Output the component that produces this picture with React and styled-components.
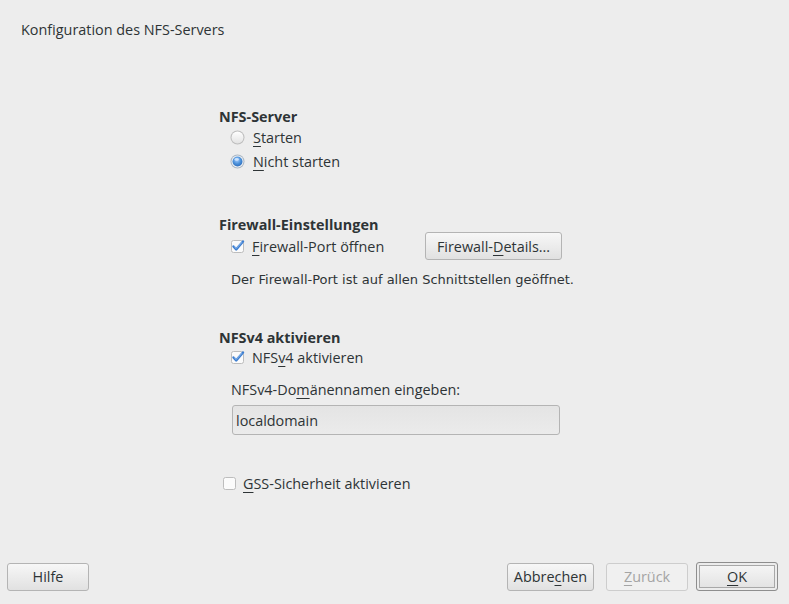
import { createGlobalStyle, styled, css } from 'styled-components';

const GlobalStyle = createGlobalStyle`
  html, body {
    margin: 0;
    padding: 0;
    background: #ededed;
  }
  body {
    font-family: "Open Sans", "Noto Sans", sans-serif;
    font-size: 14.4px;
    color: #2e3436;
  }
`;

const Window = styled.div`
  width: 789px;
  height: 604px;
  display: flex;
  flex-direction: column;
  background: #ededed;
  box-sizing: border-box;
`;

const Title = styled.div`
  padding: 20px 0 0 21px;
  line-height: 20px;
`;

const Content = styled.div`
  flex: 1;
  display: flex;
  flex-direction: column;
  padding-left: 219px;
`;

const Heading = styled.div`
  font-weight: bold;
  line-height: 16px;
  margin-top: ${(p) => p.$top}px;
`;

const Group = styled.div`
  display: flex;
  flex-direction: column;
  gap: ${(p) => p.$gap || 0}px;
  padding-left: ${(p) => (p.$indent ?? 12)}px;
  margin-top: ${(p) => p.$top || 0}px;
`;

const OptionRow = styled.label`
  display: flex;
  align-items: center;
  height: ${(p) => p.$h || 21}px;
  gap: ${(p) => p.$gap || 8}px;
`;

const Mn = styled.span`
  text-decoration: underline;
  text-underline-offset: 3px;
  text-decoration-thickness: 1px;
`;

const Note = styled.div`
  font-family: "DejaVu Sans", sans-serif;
  font-size: 13px;
  line-height: 20px;
  margin-top: ${(p) => p.$top || 0}px;
`;

const Plain = styled.div`
  line-height: 20px;
  margin-top: ${(p) => p.$top || 0}px;
`;

const buttonBase = css`
  height: 28px;
  box-sizing: border-box;
  border: 1px solid #b4b4b4;
  border-radius: 3px;
  background: linear-gradient(#f7f7f7, #e1e1e1);
  font-family: "Open Sans", "Noto Sans", sans-serif;
  font-size: 14.4px;
  color: #2e3436;
  padding: 0;
  display: inline-flex;
  align-items: center;
  justify-content: center;
`;

const Button = styled.button`
  ${buttonBase};
  width: ${(p) => p.$w}px;
  ${(p) =>
    p.$disabled &&
    css`
      background: #f0f0f0;
      border-color: #cdcdcd;
      color: #a4a4a4;
    `}
  ${(p) =>
    p.$default &&
    css`
      height: 29px;
      margin-left: -4px;
      border-color: #8e8e8e;
      box-shadow: inset 0 0 0 2px #ececec, inset 0 0 0 3px #a8a8a8;
    `}
`;

const FirewallRow = styled.div`
  display: flex;
  align-items: center;
  height: 28px;
  margin-top: -1px;
  padding-left: 12px;
`;

const CheckLabel = styled.label`
  display: flex;
  align-items: center;
  gap: 8px;
  width: 194px;
`;

const Field = styled.div`
  width: 328px;
  height: 30px;
  box-sizing: border-box;
  margin: 5px 0 0 1px;
  border: 1px solid #b4b4b4;
  border-radius: 3px;
  background: linear-gradient(#e4e4e4, #ebebeb);
  display: flex;
  align-items: center;
  padding-left: 3px;
`;

const Footer = styled.div`
  display: flex;
  align-items: center;
  padding: 0 11px 13px 7px;
  gap: 12px;
`;

const Spacer = styled.div`
  flex: 1;
`;

function Radio({ checked }) {
  return (
    <svg width="15" height="15" viewBox="0 0 15 15">
      <defs>
        <linearGradient id="ru" x1="0" y1="0" x2="0" y2="1">
          <stop offset="0" stopColor="#ffffff" />
          <stop offset="1" stopColor="#e2e2e2" />
        </linearGradient>
        <radialGradient id="rc" cx="0.45" cy="0.35" r="0.7">
          <stop offset="0" stopColor="#a4ccff" />
          <stop offset="0.55" stopColor="#4a90d9" />
          <stop offset="1" stopColor="#2b68b8" />
        </radialGradient>
      </defs>
      <circle cx="7.5" cy="7.5" r="7" fill={checked ? '#a9b6c4' : '#bdbdbd'} />
      <circle cx="7.5" cy="7.5" r="6" fill={checked ? '#f4f4f4' : 'url(#ru)'} />
      {checked && <circle cx="7.5" cy="7.5" r="5" fill="url(#rc)" />}
      {checked && <ellipse cx="6.7" cy="5.4" rx="2.2" ry="1.3" fill="#dcecff" opacity="0.8" />}
    </svg>
  );
}

function Check({ checked }) {
  return (
    <svg width="13" height="13" viewBox="0 0 13 13" overflow="visible">
      <rect x="0.5" y="0.5" width="12" height="12" rx="2" fill="#fbfbfb" stroke="#bdbdbd" />
      {checked && (
        <path
          d="M2.5 6.5 L5.2 9.4 L12 1.5"
          fill="none"
          stroke="#3b7dd0"
          strokeWidth="2.4"
          strokeLinecap="round"
          strokeLinejoin="round"
        />
      )}
      {checked && (
        <path d="M3.2 6.6 L5.2 8.5 L11 2.2" fill="none" stroke="#a9cdf5" strokeWidth="0.8" />
      )}
    </svg>
  );
}

export default function App() {
  return (
    <Window>
      <GlobalStyle />
      <Title>Konfiguration des NFS-Servers</Title>
      <Content>
        <Heading $top={69}>NFS-Server</Heading>
        <Group $gap={3} $top={2} $indent={11}>
          <OptionRow>
            <Radio />
            <span>
              <Mn>S</Mn>tarten
            </span>
          </OptionRow>
          <OptionRow>
            <Radio checked />
            <span>
              <Mn>N</Mn>icht starten
            </span>
          </OptionRow>
        </Group>

        <Heading $top={45}>Firewall-Einstellungen</Heading>
        <FirewallRow>
          <CheckLabel>
            <Check checked />
            <span>
              <Mn>F</Mn>irewall-Port öffnen
            </span>
          </CheckLabel>
          <Button $w={137}>
            Firewall-<Mn>D</Mn>etails...
          </Button>
        </FirewallRow>
        <Group>
          <Note $top={10}>Der Firewall-Port ist auf allen Schnittstellen geöffnet.</Note>
        </Group>

        <Heading $top={40}>NFSv4 aktivieren</Heading>
        <Group $top={1}>
          <OptionRow>
            <Check checked />
            <span>
              NFS<Mn>v</Mn>4 aktivieren
            </span>
          </OptionRow>
          <Plain $top={12}>
            NFSv4-Do<Mn>m</Mn>änennamen eingeben:
          </Plain>
          <Field>localdomain</Field>
        </Group>

        <Group $indent={4} $top={38}>
          <OptionRow $gap={7}>
            <Check />
            <span>
              <Mn>G</Mn>SS-Sicherheit aktivieren
            </span>
          </OptionRow>
        </Group>
      </Content>
      <Footer>
        <Button $w={82}>Hilfe</Button>
        <Spacer />
        <Button $w={87}>
          Abbre<Mn>c</Mn>hen
        </Button>
        <Button $w={82} $disabled>
          <Mn>Z</Mn>urück
        </Button>
        <Button $w={82} $default>
          <Mn>O</Mn>K
        </Button>
      </Footer>
    </Window>
  );
}
